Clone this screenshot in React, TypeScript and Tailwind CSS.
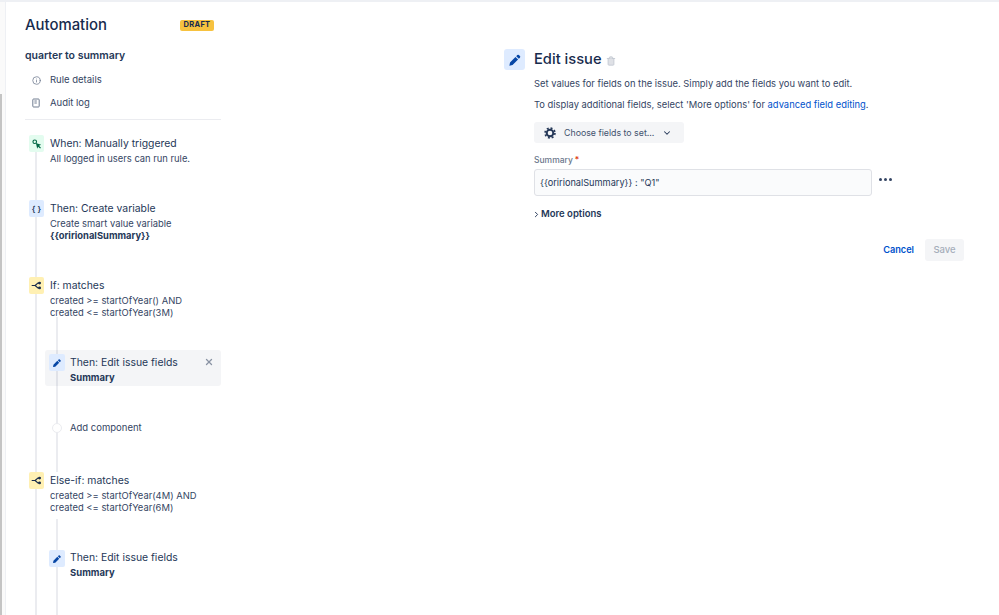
import React from 'react';
import { ChevronDown, ChevronRight, Info, Trash2, X } from 'lucide-react';

const Pencil: React.FC<{ className?: string }> = ({ className = '' }) => (
  <svg viewBox="0 0 16 16" className={className} fill="currentColor">
    <path d="M10.6 2.4a1.3 1.3 0 0 1 1.9 0l1.1 1.1a1.3 1.3 0 0 1 0 1.9l-1.2 1.2-3-3zM8.5 4.5l3 3-6.3 6.3-3.6.7.7-3.7z" />
  </svg>
);

const Branch = () => (
  <svg viewBox="0 0 16 16" className="w-[11px] h-[11px] text-[#172b4d]" fill="none" stroke="currentColor" strokeWidth="1.6">
    <path d="M1 8h5M6 8l4-3.5h2M6 8l4 3.5h2" />
    <circle cx="12.5" cy="4.5" r="1.2" fill="currentColor" />
    <circle cx="12.5" cy="11.5" r="1.2" fill="currentColor" />
  </svg>
);

const Trigger = () => (
  <svg viewBox="0 0 16 16" className="w-[12px] h-[12px]">
    <circle cx="5" cy="5" r="2.4" fill="none" stroke="#006644" strokeWidth="1.5" />
    <path d="M6.5 6.5l7 2.6-2.8 1.2 2.6 2.6-1.2 1.2-2.6-2.6-1.2 2.8z" fill="#006644" />
  </svg>
);

const Gear = () => (
  <svg viewBox="0 0 16 16" className="w-[12px] h-[12px] text-[#253858]" fill="none" stroke="currentColor">
    <circle cx="8" cy="8" r="4.4" strokeWidth="2.6" />
    <circle cx="8" cy="8" r="6.6" strokeWidth="2.2" strokeDasharray="2.6 2.58" />
  </svg>
);

const AuditLog = () => (
  <svg viewBox="0 0 10 12" className="w-[8px] h-[10px] text-[#6b778c]" fill="none" stroke="currentColor" strokeWidth="1.2">
    <rect x="1" y="1" width="8" height="10" rx="1" />
    <path d="M3 3.5h3M3 6h3" />
  </svg>
);

interface StepProps {
  icon: React.ReactNode;
  tone: string;
  title: string;
  children?: React.ReactNode;
  className?: string;
}

const Step: React.FC<StepProps> = ({ icon, tone, title, children, className = '' }) => (
  <div className={`flex items-start ${className}`}>
    <div className={`w-[15px] h-[17px] -ml-[8px] rounded-[2px] flex items-center justify-center shrink-0 ${tone}`}>{icon}</div>
    <div className="ml-[6px] text-[9.4px] leading-[11.5px] text-[#344563]">
      <div className="text-[10.4px] leading-[17px] mb-[1px] text-[#253858]">{title}</div>
      {children}
    </div>
  </div>
);

export default function App() {
  return (
    <div className="w-[999px] h-[615px] overflow-hidden bg-white flex border-t-2 border-[#eef0f4] font-['Inter','Liberation_Sans',sans-serif] text-[#172b4d]">
      {/* scroll strip */}
      <div className="w-[6px] shrink-0 border-r border-[#eef0f4] bg-[#fafafa] pt-[92px]">
        <div className="w-[2px] h-full bg-[#c4c4c4]" />
      </div>

      {/* rule sidebar */}
      <aside className="w-[215px] shrink-0 pl-[19px] pr-0 pt-[13px]">
        <div className="flex items-center justify-between pr-[7px] h-[20px]">
          <h1 className="text-[14.9px] leading-[20px] font-medium text-[#172b4d]">Automation</h1>
          <span className="h-[11px] w-[34px] flex items-center justify-center rounded-[2px] bg-[#f7c23f] text-[7.5px] font-bold tracking-[0.3px] text-[#172b4d]">DRAFT</span>
        </div>
        <div className="mt-[14px] text-[10.5px] leading-[14px] font-semibold text-[#253858]">quarter to summary</div>
        <div className="mt-[11px] flex items-center h-[12px] pl-[7px] text-[9.5px] text-[#344563]">
          <Info className="w-[9px] h-[9px] text-[#6b778c]" />
          <span className="ml-[9px]">Rule details</span>
        </div>
        <div className="mt-[11px] flex items-center h-[12px] pl-[7px] text-[9.5px] text-[#344563]">
          <AuditLog />
          <span className="ml-[10px]">Audit log</span>
        </div>
        <div className="mt-[10px] h-px w-[196px] bg-[#ebecf0]" />

        {/* timeline */}
        <div className="mt-[15px] ml-[10px] border-l-2 border-[#ebecf0] h-[600px]">
          <Step icon={<Trigger />} tone="bg-[#e3fcef]" title="When: Manually triggered" className="h-[65px]">
            <div>All logged in users can run rule.</div>
          </Step>
          <Step icon={<span className="text-[8px] font-semibold leading-none text-[#253858]">{'{ }'}</span>} tone="bg-[#deebff]" title="Then: Create variable" className="h-[77px]">
            <div>Create smart value variable</div>
            <div className="font-bold text-[#253858]">{'{{oririonalSummary}}'}</div>
          </Step>
          <Step icon={<Branch />} tone="bg-[#fff0b3]" title="If: matches" className="h-[40px]">
            <div>created &gt;= startOfYear() AND</div>
            <div>created &lt;= startOfYear(3M)</div>
          </Step>

          <div className="ml-[19px] h-[155px] border-l-2 border-[#ebecf0]">
            <div className="h-[33px]" />
            <div className="-ml-[13px] w-[176px] h-[36px] rounded-[3px] bg-[#091e420b] pl-[4px] pr-[7px] pt-[4px] flex items-start">
              <div className="w-4 h-[17px] rounded-[2px] bg-[#deebff] flex items-center justify-center shrink-0">
                <Pencil className="w-[10px] h-[10px] text-[#0747a6]" />
              </div>
              <div className="ml-[5px] flex-1 pt-[1px]">
                <div className="text-[10.4px] leading-[16px] text-[#253858]">Then: Edit issue fields</div>
                <div className="text-[9.5px] leading-[14px] font-bold text-[#253858]">Summary</div>
              </div>
              <X className="w-[10px] h-[10px] mt-[3px] text-[#8993a4]" strokeWidth={3} />
            </div>
            <div className="mt-[37px] flex items-center h-[10px]">
              <span className="-ml-[6px] w-[10px] h-[10px] rounded-full bg-white border border-[#ebecf0] shrink-0" />
              <span className="ml-[8px] text-[9.5px] text-[#344563]">Add component</span>
            </div>
          </div>

          <Step icon={<Branch />} tone="bg-[#fff0b3]" title="Else-if: matches" className="h-[35px]">
            <div>created &gt;= startOfYear(4M) AND</div>
            <div>created &lt;= startOfYear(6M)</div>
          </Step>

          <div className="ml-[19px] mt-[12px] h-[120px] border-l-2 border-[#ebecf0] pt-[31px]">
            <div className="flex items-start">
              <div className="-ml-[9px] w-4 h-[17px] rounded-[2px] bg-[#deebff] flex items-center justify-center shrink-0">
                <Pencil className="w-[10px] h-[10px] text-[#0747a6]" />
              </div>
              <div className="ml-[5px]">
                <div className="text-[10.4px] leading-[16px] text-[#253858]">Then: Edit issue fields</div>
                <div className="text-[9.5px] leading-[14px] font-bold text-[#253858]">Summary</div>
              </div>
            </div>
          </div>
        </div>
      </aside>

      {/* component config */}
      <main className="flex-1 pl-[283px] pt-[47px]">
        <div className="flex items-center h-[21px]">
          <div className="w-[21px] h-[21px] rounded-[3px] bg-[#deebff] flex items-center justify-center">
            <Pencil className="w-[14px] h-[14px] text-[#0747a6]" />
          </div>
          <h2 className="ml-[9px] pb-[2px] text-[14.7px] leading-[20px] font-medium text-[#172b4d]">Edit issue</h2>
          <Trash2 className="ml-[4px] w-[10px] h-[10px] mt-[2px] text-[#c1c7d0] fill-[#dfe1e6]" />
        </div>
        <div className="ml-[30px]">
          <p className="mt-[7px] text-[9.4px] leading-[14px] text-[#344563]">Set values for fields on the issue. Simply add the fields you want to edit.</p>
          <p className="mt-[7px] text-[9.4px] leading-[14px] text-[#344563]">
            To display additional fields, select 'More options' for <span className="text-[#0052cc]">advanced field editing</span>.
          </p>
          <div className="mt-[10px] w-[150px] h-[21px] rounded-[3px] bg-[#f4f5f7] flex items-center pl-[10px] text-[#42526e]">
            <Gear />
            <span className="ml-[8px] text-[8.8px]">Choose fields to set...</span>
            <ChevronDown className="ml-[8px] w-[10px] h-[10px] text-[#253858]" strokeWidth={2.5} />
          </div>
          <div className="mt-[12px] h-[11px] text-[8.5px] leading-[11px] font-medium text-[#6b778c]">
            Summary<span className="ml-[2px] text-[#de350b]">*</span>
          </div>
          <div className="mt-[3px] flex items-start">
            <div className="w-[338px] h-[27px] rounded-[3px] border border-[#dfe1e6] bg-[#fafbfc] flex items-center pl-[5px] text-[9.2px] text-[#253858]">
              {'{{oririonalSummary}} : "Q1"'}
            </div>
            <div className="ml-[7px] mt-[9px] flex gap-[2px]">
              <span className="w-[3px] h-[3px] rounded-full bg-[#344563]" />
              <span className="w-[3px] h-[3px] rounded-full bg-[#344563]" />
              <span className="w-[3px] h-[3px] rounded-full bg-[#344563]" />
            </div>
          </div>
          <div className="mt-[12px] flex items-center h-[13px] text-[9.5px] font-semibold text-[#253858]">
            <ChevronRight className="-ml-[2px] w-[9px] h-[9px]" strokeWidth={2.5} />
            <span>More options</span>
          </div>
          <div className="mt-[18px] w-[430px] flex items-center justify-end">
            <span className="text-[9.2px] font-semibold text-[#0052cc]">Cancel</span>
            <span className="ml-[11px] w-[39px] h-[22px] rounded-[3px] bg-[#f4f5f7] flex items-center justify-center text-[9.5px] font-medium text-[#a5adba]">Save</span>
          </div>
        </div>
      </main>
    </div>
  );
}
